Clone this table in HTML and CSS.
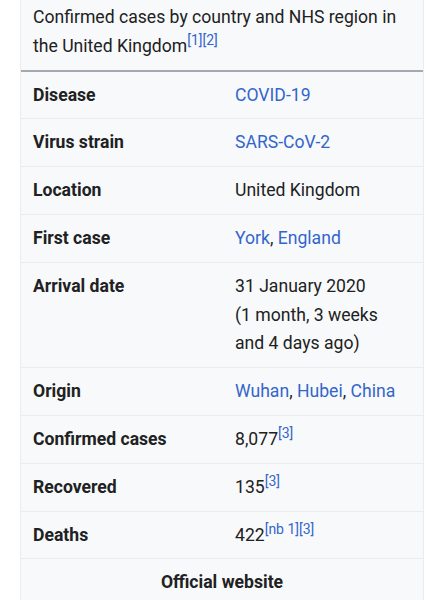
FILE: index.html
```html
<!DOCTYPE html>
<html lang="en">
<head>
<meta charset="utf-8">
<title>COVID-19 in the United Kingdom</title>
<link rel="stylesheet" href="styles.css">
</head>
<body>
<div class="infobox">
  <div class="caption">Confirmed cases by country and NHS region in the United Kingdom<sup class="ref"><a href="#">[1]</a><a href="#">[2]</a></sup></div>
  <table class="rows">
    <tr><th>Disease</th><td><a href="#">COVID-19</a></td></tr>
    <tr><th>Virus strain</th><td><a href="#">SARS-CoV-2</a></td></tr>
    <tr><th>Location</th><td>United Kingdom</td></tr>
    <tr><th>First case</th><td><a href="#">York</a>, <a href="#">England</a></td></tr>
    <tr><th>Arrival date</th><td>31 January 2020<br>(1 month, 3 weeks and 4 days ago)</td></tr>
    <tr><th>Origin</th><td><a href="#">Wuhan</a>, <a href="#">Hubei</a>, <a href="#">China</a></td></tr>
    <tr><th>Confirmed cases</th><td>8,077<sup class="ref"><a href="#">[3]</a></sup></td></tr>
    <tr><th>Recovered</th><td>135<sup class="ref"><a href="#">[3]</a></sup></td></tr>
    <tr><th>Deaths</th><td>422<sup class="ref"><a href="#">[nb 1]</a><a href="#">[3]</a></sup></td></tr>
    <tr><th colspan="2" class="center">Official website</th></tr>
  </table>
</div>
</body>
</html>
```
FILE: styles.css
```css
html, body {
  margin: 0;
  padding: 0;
  background: #ffffff;
}
body {
  font-family: Roboto, "Liberation Sans", sans-serif;
  font-size: 17.6px;
  line-height: 28.8px;
  color: #202122;
}
a {
  color: #3366cc;
  text-decoration: none;
}
.infobox {
  margin-left: 20px;
  width: 402px;
  background: #f8f9fa;
  border: 1px solid #eaecf0;
  border-top: none;
}
.caption {
  padding: 3px 12px 9px 12px;
  border-bottom: 2px solid #a2a9b1;
}
.ref {
  font-size: 14px;
  line-height: 1;
  vertical-align: 7px;
}
.rows {
  width: 100%;
  border-collapse: collapse;
  table-layout: fixed;
}
.rows th, .rows td {
  padding: 9px 12px;
  text-align: left;
  vertical-align: top;
  border-bottom: 1px solid #eaecf0;
}
.rows th {
  width: 178px;
  font-weight: bold;
}
.rows th.center {
  text-align: center;
}
```
